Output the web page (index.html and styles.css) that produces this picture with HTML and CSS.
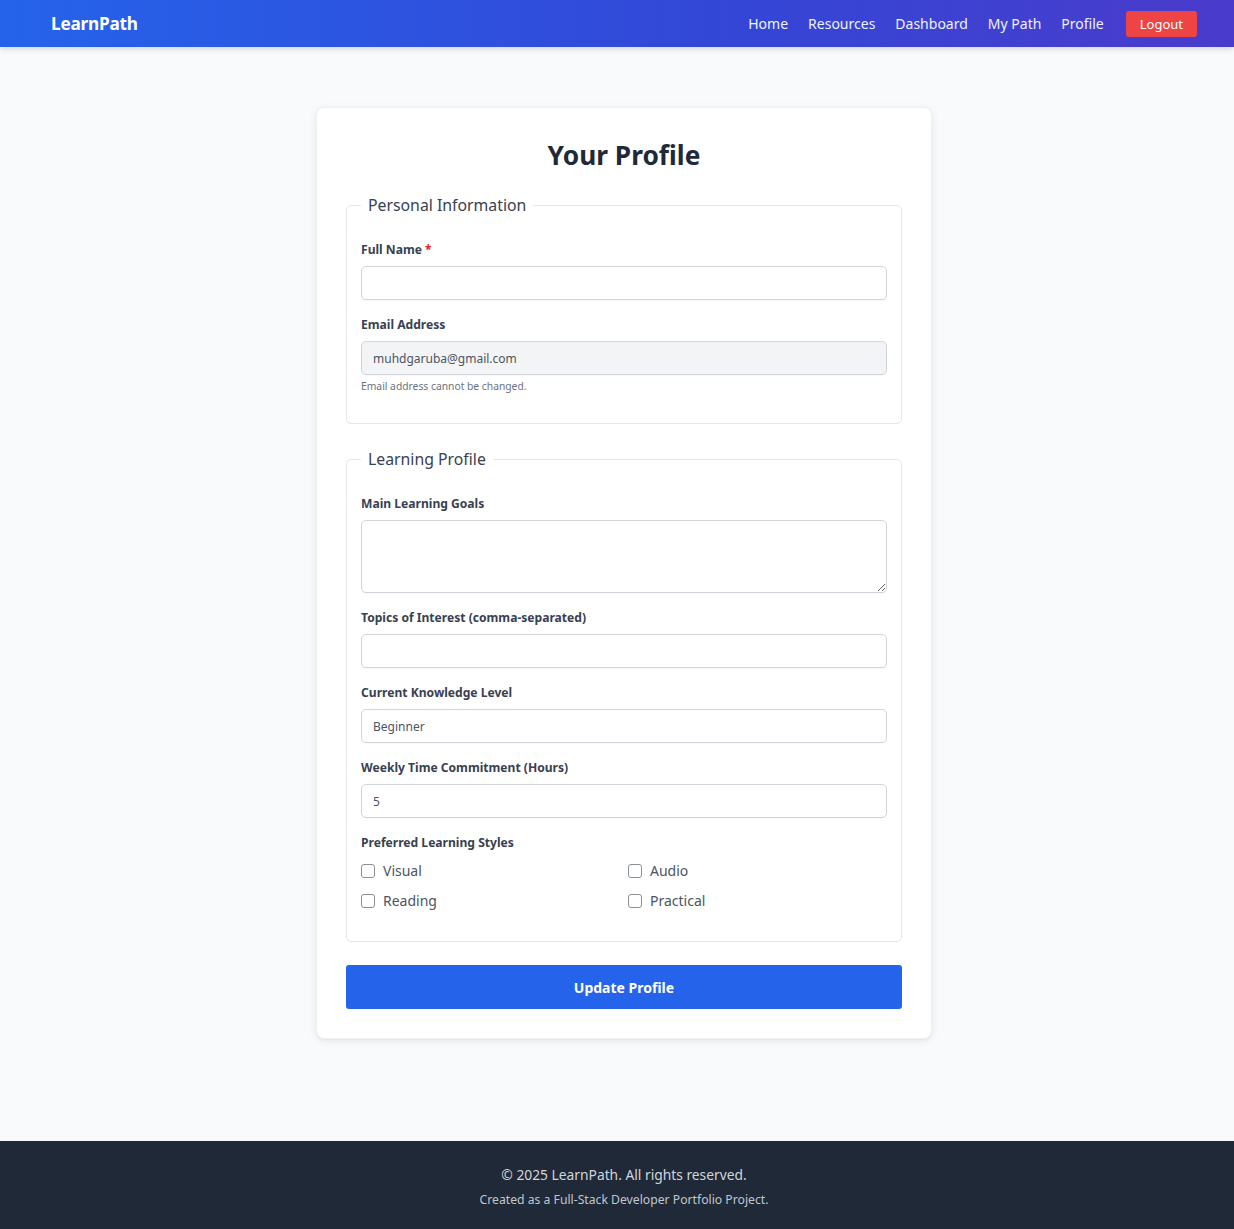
FILE: index.html
```html
<!DOCTYPE html>
<html lang="en">
<head>
<meta charset="utf-8">
<title>LearnPath - Your Profile</title>
<link rel="stylesheet" href="styles.css">
</head>
<body>
<header class="navbar">
  <a class="brand" href="#">LearnPath</a>
  <nav class="nav-links">
    <a href="#">Home</a>
    <a href="#">Resources</a>
    <a href="#">Dashboard</a>
    <a href="#">My Path</a>
    <a href="#">Profile</a>
    <button class="logout" type="button">Logout</button>
  </nav>
</header>

<main class="main">
  <section class="card">
    <h1 class="title">Your Profile</h1>
    <form class="form">
      <fieldset class="fieldset">
        <legend class="legend">Personal Information</legend>
        <div class="group">
          <label class="label">Full Name <span class="req">*</span></label>
          <input class="input" type="text">
        </div>
        <div class="group">
          <label class="label">Email Address</label>
          <input class="input input-disabled" type="email" value="muhdgaruba@gmail.com" disabled>
          <p class="hint">Email address cannot be changed.</p>
        </div>
      </fieldset>

      <fieldset class="fieldset">
        <legend class="legend">Learning Profile</legend>
        <div class="group">
          <label class="label">Main Learning Goals</label>
          <textarea class="input textarea"></textarea>
        </div>
        <div class="group">
          <label class="label">Topics of Interest (comma-separated)</label>
          <input class="input" type="text">
        </div>
        <div class="group">
          <label class="label">Current Knowledge Level</label>
          <select class="input select"><option>Beginner</option></select>
        </div>
        <div class="group">
          <label class="label">Weekly Time Commitment (Hours)</label>
          <input class="input" type="text" value="5">
        </div>
        <div class="group">
          <label class="label">Preferred Learning Styles</label>
          <div class="checks">
            <label class="check"><span class="box"></span>Visual</label>
            <label class="check"><span class="box"></span>Audio</label>
            <label class="check"><span class="box"></span>Reading</label>
            <label class="check"><span class="box"></span>Practical</label>
          </div>
        </div>
      </fieldset>

      <button class="submit" type="button">Update Profile</button>
    </form>
  </section>
</main>

<footer class="footer">
  <p class="copy">© 2025 LearnPath. All rights reserved.</p>
  <p class="credit">Created as a Full-Stack Developer Portfolio Project.</p>
</footer>
</body>
</html>
```

FILE: styles.css
```css
* { box-sizing: border-box; }

html, body { margin: 0; padding: 0; }

body {
  font-family: "Noto Sans", "Open Sans", sans-serif;
  background: #f8fafc;
  color: #1f2937;
  min-height: 100vh;
  display: flex;
  flex-direction: column;
}

.navbar {
  height: 47px;
  display: flex;
  align-items: center;
  justify-content: space-between;
  padding: 0 37px 0 51px;
  background: linear-gradient(90deg, #2563eb 0%, #3446d6 60%, #4a3bcb 100%);
  box-shadow: 0 2px 6px rgba(0, 0, 0, 0.15);
}

.brand {
  color: #ffffff;
  font-weight: 700;
  font-size: 17.2px;
  text-decoration: none;
  letter-spacing: -0.2px;
}

.nav-links {
  display: flex;
  align-items: center;
  gap: 20px;
}

.nav-links a {
  color: #eef2ff;
  font-size: 14px;
  text-decoration: none;
}

.logout {
  margin-left: 2px;
  height: 26px;
  padding: 0 14px;
  border: none;
  border-radius: 3px;
  background: #ef4444;
  color: #ffffff;
  font-family: inherit;
  font-size: 13px;
}

.main {
  flex: 1;
  display: flex;
  justify-content: center;
  align-items: flex-start;
  padding: 60px 0 0 14px;
}

.card {
  width: 616px;
  background: #ffffff;
  border-radius: 8px;
  box-shadow: 0 2px 8px rgba(0, 0, 0, 0.08), 0 1px 2px rgba(0, 0, 0, 0.04);
  border: 1px solid #eef0f3;
  padding: 29px;
}

.title {
  margin: 0 0 20px;
  text-align: center;
  font-size: 26.3px;
  line-height: 36px;
  font-weight: 700;
  color: #1f2937;
}

.form { margin: 0; }

.fieldset {
  margin: 0 0 23px;
  padding: 24px 14px 0;
  border: 1px solid #e5e7eb;
  border-radius: 5px;
}

.legend {
  padding: 0 7px;
  font-size: 15.8px;
  line-height: 24px;
  color: #374151;
}

.group { margin-bottom: 16px; }

.fieldset .group:last-child { margin-bottom: 30px; }

.label {
  display: block;
  margin-bottom: 8px;
  font-size: 12.1px;
  line-height: 17px;
  font-weight: 700;
  color: #374151;
}

.req { color: #dc2626; }

.input {
  display: block;
  width: 100%;
  height: 34px;
  margin: 0;
  padding: 0 11px;
  border: 1px solid #d1d5db;
  border-radius: 5px;
  background: #ffffff;
  font-family: inherit;
  font-size: 12px;
  color: #4b5563;
  box-shadow: 0 1px 1px rgba(0, 0, 0, 0.03);
}

.input-disabled {
  background: #f3f4f6;
  color: #4b5563;
  -webkit-text-fill-color: #4b5563;
  opacity: 1;
}

.textarea {
  height: 73px;
  padding: 8px 11px;
  resize: vertical;
}

.select {
  appearance: none;
  -webkit-appearance: none;
}

.hint {
  margin: 4px 0 0;
  font-size: 10.3px;
  line-height: 14px;
  color: #6b7280;
}

.checks {
  display: grid;
  grid-template-columns: 1fr 1fr;
  column-gap: 8px;
  row-gap: 10px;
  padding-top: 2px;
}

.check {
  display: flex;
  align-items: center;
  gap: 8px;
  font-size: 14px;
  line-height: 20px;
  color: #4b5563;
}

.box {
  width: 14px;
  height: 14px;
  border: 1px solid #8a8f98;
  border-radius: 3px;
  background: #ffffff;
  flex: none;
}

.submit {
  display: block;
  width: 100%;
  height: 44px;
  border: none;
  border-radius: 3px;
  background: #2563eb;
  color: #ffffff;
  font-family: inherit;
  font-size: 14px;
  font-weight: 700;
}

.footer {
  background: #1f2937;
  padding: 24px 0 21px 14px;
  text-align: center;
}

.copy {
  margin: 0 0 6px;
  font-size: 13.8px;
  line-height: 20px;
  color: #d1d5db;
}

.credit {
  margin: 0;
  font-size: 12.2px;
  line-height: 17px;
  color: #c0c6cf;
}
```
